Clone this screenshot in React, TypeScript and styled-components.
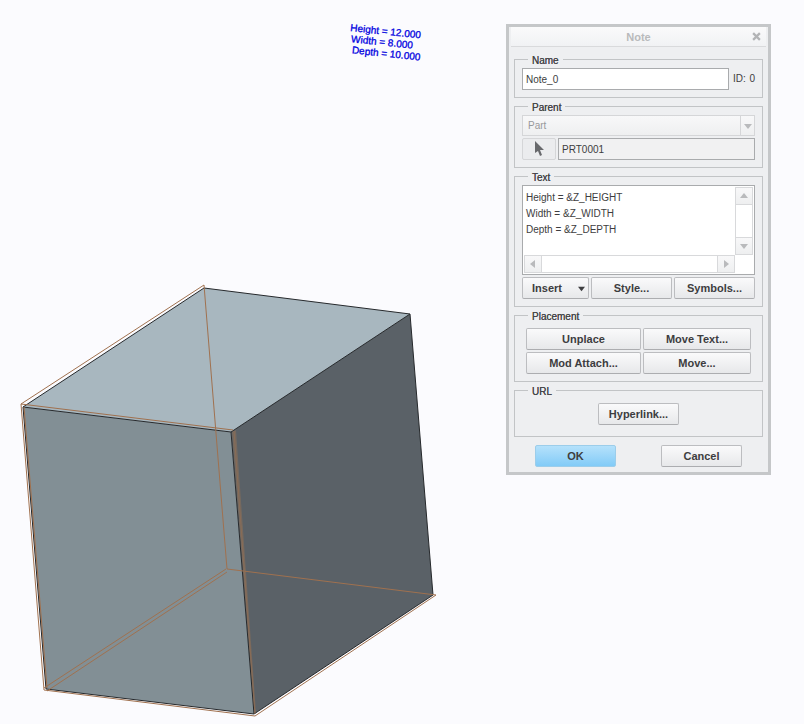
import React from "react";
import styled, { createGlobalStyle, css } from "styled-components";

const GlobalStyle = createGlobalStyle`
  * { box-sizing: border-box; }
  body {
    margin: 0;
    background: #fbfbfe;
    color: #3d3d40;
    font: 10px/12px "Liberation Sans", Arial, sans-serif;
  }
`;

const Workspace = styled.main`
  position: relative;
  min-height: 100vh;
  overflow: hidden;
`;

const ModelView = styled.svg`
  display: block;
  width: 100%;
  height: auto;
`;

const Annotation = styled.text`
  font: 10px "Liberation Sans", Arial, sans-serif;
  fill: #0000e0;
  stroke: #0000e0;
  stroke-width: 0.3;
`;

const Dialog = styled.section`
  position: absolute;
  top: 24px;
  right: 33px;
  width: 265px;
  border: 3px solid #c5c7c9;
  background: #eeeff1;
`;

const TitleBar = styled.header`
  display: grid;
  grid-template-columns: 20px 1fr 20px;
  align-items: center;
  height: 20px;
  margin: 0 2px;
  border-bottom: 1px solid #d9dadc;
  background: linear-gradient(#fafafb, #f1f2f4);
`;

const Title = styled.h1`
  grid-column: 2;
  margin: 0;
  font-size: 11px;
  line-height: 14px;
  text-align: center;
  color: #b9babc;
`;

const CloseButton = styled.button`
  display: flex;
  justify-content: center;
  padding: 0;
  border: 0;
  background: none;
`;

const Form = styled.form`
  display: flex;
  flex-direction: column;
  gap: 2px;
  padding: 6px 5px 5px;
`;

const Group = styled.fieldset<{ $inset?: boolean }>`
  min-width: 0;
  margin: 0;
  padding: ${(p) => (p.$inset ? "6px 11px 7px" : "2px 7px 7px")};
  border: 1px solid #c2c4c6;
`;

const Legend = styled.legend<{ $inset?: boolean }>`
  margin-left: ${(p) => (p.$inset ? "2px" : "6px")};
  padding: 2px 4px 0;
  font-size: 10px;
  line-height: 11px;
  color: #47474a;
  text-shadow: 0 0 0 #47474a;
`;

const Row = styled.div<{ $gap?: number; $top?: number }>`
  display: flex;
  align-items: center;
  gap: ${(p) => p.$gap ?? 2}px;
  margin-top: ${(p) => p.$top ?? 0}px;
`;

const TextInput = styled.input`
  flex: 1;
  min-width: 0;
  height: 22px;
  padding: 0 3px;
  border: 1px solid #a9abad;
  background: ${(p) => (p.readOnly ? "#f1f1f2" : "#fff")};
  color: inherit;
  font: inherit;
  outline: 0;
`;

const IdLabel = styled.span`
  display: flex;
  justify-content: space-between;
  width: 22px;
`;

const SelectBox = styled.div`
  display: grid;
  grid-template-columns: 1fr 14px;
  height: 21px;
  border: 1px solid #d5d6d8;
  background: linear-gradient(#f8f8f9, #eeeff0);
`;

const Select = styled.select`
  grid-area: 1 / 1 / 2 / 3;
  appearance: none;
  padding: 0 5px;
  border: 0;
  background: none;
  color: #98999b;
  font: inherit;
  opacity: 1;
`;

const SelectArrow = styled.span`
  grid-area: 1 / 2;
  display: flex;
  align-items: center;
  justify-content: center;
  border-left: 1px solid #d5d6d8;
  pointer-events: none;
`;

const raised = css`
  border: 1px solid #bcbdc0;
  border-radius: 2px;
  background: linear-gradient(#fafafb, #e7e8ea);
`;

const Button = styled.button<{ $width?: number; $primary?: boolean }>`
  ${raised}
  display: flex;
  align-items: center;
  justify-content: center;
  flex: ${(p) => (p.$width ? `0 0 ${p.$width}px` : "1")};
  height: 22px;
  padding: 0;
  border-bottom-color: #acadb0;
  color: #3d3d40;
  font: bold 11px/14px "Liberation Sans", Arial, sans-serif;
  ${(p) =>
    p.$primary &&
    css`
      border-color: #9ccdea;
      background: linear-gradient(#b5e1fb, #82cbf7);
    `}
`;

const MenuButton = styled(Button)`
  justify-content: space-between;
  padding: 0 3px 0 9px;
`;

const PickButton = styled.button`
  display: flex;
  align-items: center;
  justify-content: center;
  width: 34px;
  height: 22px;
  padding: 0;
  border: 1px solid #d5d6d8;
  border-radius: 2px;
  background: #ebecee;
`;

const Editor = styled.div`
  display: grid;
  grid-template-columns: 1fr 18px;
  grid-template-rows: 1fr 18px;
  height: 90px;
  padding: 1px;
  border: 1px solid #a9abad;
  background: #fff;
`;

const TextArea = styled.textarea`
  width: 100%;
  height: 100%;
  padding: 3px 2px;
  border: 0;
  background: none;
  color: inherit;
  font: inherit;
  line-height: 16px;
  white-space: pre;
  overflow: hidden;
  resize: none;
  outline: 0;
`;

const ScrollBar = styled.div<{ $vertical?: boolean }>`
  display: flex;
  flex-direction: ${(p) => (p.$vertical ? "column" : "row")};
  justify-content: space-between;
  border: 1px solid #d8d9db;
`;

const ScrollButton = styled.button`
  display: flex;
  align-items: center;
  justify-content: center;
  width: 16px;
  height: 16px;
  padding: 0;
  border: 0;
  outline: 1px solid #d8d9db;
  background: linear-gradient(#f8f8f9, #eeeff0);
`;

const ButtonGrid = styled.div`
  display: grid;
  grid-template-columns: 115fr 108fr;
  gap: 2px;
`;

const Centered = styled.div`
  display: flex;
  justify-content: center;
  padding-bottom: 4px;
`;

const Footer = styled.footer`
  display: flex;
  justify-content: space-between;
  padding: 6px 21px 0;
`;

const arrows = {
  up: "M0 6L4 1L8 6Z",
  down: "M0 2L8 2L4 7Z",
  left: "M6 0L1 4L6 8Z",
  right: "M2 0L7 4L2 8Z",
};

function Arrow({ to, color = "#b9babc", size = 8 }: { to: keyof typeof arrows; color?: string; size?: number }) {
  return (
    <svg width={size} height={size} viewBox="0 0 8 8" aria-hidden="true">
      <path d={arrows[to]} fill={color} />
    </svg>
  );
}

function Model() {
  return (
    <ModelView viewBox="0 0 804 724" role="img" aria-label="Solid block with datum edges">
      <path d="M204 288L410 314L231 432L23 407Z" fill="#a8b7bf" />
      <path d="M23 407L231 432L254 714L46 689Z" fill="#828f95" />
      <path d="M231 432L410 314L433 595L254 714Z" fill="#5a6167" />
      <path d="M232 432L236 430L256 713L254 714Z" fill="#75695f" />
      <g fill="none" stroke="#26292c" strokeWidth="1">
        <path d="M204 288L410 314L433 595L254 714L46 689L23 407Z" />
        <path d="M23 407L231 432L410 314M231 432L254 714" />
      </g>
      <g fill="none" stroke="#a0714f" strokeWidth="1">
        <path d="M204 285L21 404L44 690L255 716L436 595L227 569L204 285" />
        <path d="M21 404L233 430" />
        <path d="M24 407L47 688M226 569L44 688M227 572L47 691" />
      </g>
      <path d="M234 431L255 714" fill="none" stroke="#8a6c56" />
      <g transform="translate(350 31) rotate(6)">
        <Annotation>Height = 12.000</Annotation>
        <Annotation x="2" y="11">Width = 8.000</Annotation>
        <Annotation x="4" y="22">Depth = 10.000</Annotation>
      </g>
    </ModelView>
  );
}

export default function App() {
  return (
    <>
      <GlobalStyle />
      <Workspace>
        <Model />
        <Dialog role="dialog" aria-labelledby="note-title">
          <TitleBar>
            <Title id="note-title">Note</Title>
            <CloseButton type="button" aria-label="Close">
              <svg width="9" height="9" viewBox="0 0 8 8">
                <path d="M1 1L7 7M7 1L1 7" stroke="#b3b4b6" strokeWidth="2" />
              </svg>
            </CloseButton>
          </TitleBar>
          <Form onSubmit={(e) => e.preventDefault()}>
            <Group>
              <Legend>Name</Legend>
              <Row $gap={4}>
                <TextInput aria-label="Name" defaultValue="Note_0" />
                <IdLabel>
                  <span>ID:</span>
                  <span>0</span>
                </IdLabel>
              </Row>
            </Group>
            <Group>
              <Legend>Parent</Legend>
              <SelectBox>
                <Select aria-label="Parent type" disabled>
                  <option>Part</option>
                </Select>
                <SelectArrow>
                  <Arrow to="down" />
                </SelectArrow>
              </SelectBox>
              <Row $top={2}>
                <PickButton type="button" aria-label="Select parent">
                  <svg width="12" height="16" viewBox="0 0 12 16">
                    <path d="M2 0L2 12L5 10L7 15L9 14L7 9L11 9Z" fill="#68696c" />
                  </svg>
                </PickButton>
                <TextInput aria-label="Parent name" defaultValue="PRT0001" readOnly />
              </Row>
            </Group>
            <Group>
              <Legend>Text</Legend>
              <Editor>
                <TextArea
                  aria-label="Text"
                  wrap="off"
                  spellCheck={false}
                  defaultValue={"Height = &Z_HEIGHT\nWidth = &Z_WIDTH\nDepth = &Z_DEPTH"}
                />
                <ScrollBar $vertical>
                  <ScrollButton type="button" aria-label="Scroll up"><Arrow to="up" /></ScrollButton>
                  <ScrollButton type="button" aria-label="Scroll down"><Arrow to="down" /></ScrollButton>
                </ScrollBar>
                <ScrollBar>
                  <ScrollButton type="button" aria-label="Scroll left"><Arrow to="left" /></ScrollButton>
                  <ScrollButton type="button" aria-label="Scroll right"><Arrow to="right" /></ScrollButton>
                </ScrollBar>
              </Editor>
              <Row $top={2}>
                <MenuButton type="button" $width={67} aria-haspopup="menu">
                  Insert
                  <Arrow to="down" color="#3d3d40" size={7} />
                </MenuButton>
                <Button type="button">Style...</Button>
                <Button type="button">Symbols...</Button>
              </Row>
            </Group>
            <Group $inset>
              <Legend $inset>Placement</Legend>
              <ButtonGrid>
                <Button type="button">Unplace</Button>
                <Button type="button">Move Text...</Button>
                <Button type="button">Mod Attach...</Button>
                <Button type="button">Move...</Button>
              </ButtonGrid>
            </Group>
            <Group $inset>
              <Legend $inset>URL</Legend>
              <Centered>
                <Button type="button" $width={81}>Hyperlink...</Button>
              </Centered>
            </Group>
            <Footer>
              <Button type="submit" $width={81} $primary>OK</Button>
              <Button type="button" $width={81}>Cancel</Button>
            </Footer>
          </Form>
        </Dialog>
      </Workspace>
    </>
  );
}
